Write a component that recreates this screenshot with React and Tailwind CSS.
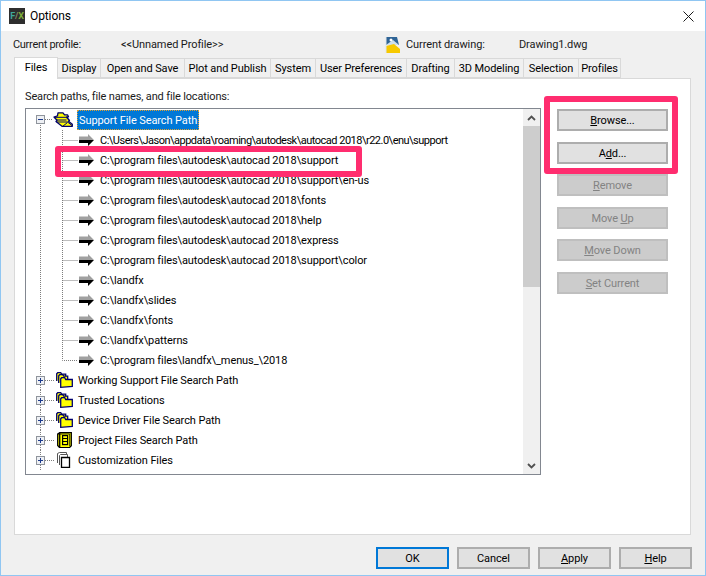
const font = "font-['Roboto','Liberation_Sans',Arial,sans-serif]";

const tabs = [
  { label: "Files", w: "w-[44px]", active: true },
  { label: "Display", w: "w-[43px]" },
  { label: "Open and Save", w: "w-[84px]" },
  { label: "Plot and Publish", w: "w-[86px]" },
  { label: "System", w: "w-[45px]" },
  { label: "User Preferences", w: "w-[91px]" },
  { label: "Drafting", w: "w-[48px]" },
  { label: "3D Modeling", w: "w-[69px]" },
  { label: "Selection", w: "w-[55px]" },
  { label: "Profiles", w: "w-[42px]" },
];

const paths = [
  "C:\\Users\\Jason\\appdata\\roaming\\autodesk\\autocad 2018\\r22.0\\enu\\support",
  "C:\\program files\\autodesk\\autocad 2018\\support",
  "C:\\program files\\autodesk\\autocad 2018\\support\\en-us",
  "C:\\program files\\autodesk\\autocad 2018\\fonts",
  "C:\\program files\\autodesk\\autocad 2018\\help",
  "C:\\program files\\autodesk\\autocad 2018\\express",
  "C:\\program files\\autodesk\\autocad 2018\\support\\color",
  "C:\\landfx",
  "C:\\landfx\\slides",
  "C:\\landfx\\fonts",
  "C:\\landfx\\patterns",
  "C:\\program files\\landfx\\_menus_\\2018",
];

const sections = [
  { label: "Working Support File Search Path", icon: "folders" },
  { label: "Trusted Locations", icon: "folders" },
  { label: "Device Driver File Search Path", icon: "folders" },
  { label: "Project Files Search Path", icon: "project" },
  { label: "Customization Files", icon: "pages" },
];

const AppIcon = () => (
  <div className="flex h-4 w-4 shrink-0 items-center justify-center bg-[#2e2e2e] text-[9px] font-bold leading-none">
    <span className="text-[#3fa89a]">F</span>
    <span className="text-[#8a8a6a]">/</span>
    <span className="text-[#7fae3a]">X</span>
  </div>
);

const DrawingIcon = () => (
  <svg width="16" height="16" viewBox="0 0 16 16" className="shrink-0">
    <path d="M1 0h11l2 8H1z" fill="#2f6496" />
    <path d="M1 8L8 3l6 5z" fill="#cfe0ec" />
    <path d="M1 9l8-2 6 5v4H1z" fill="#f7c900" />
    <circle cx="6" cy="3" r="1.5" fill="#fff" />
    <path d="M1 0v16" stroke="#e0e6ea" />
  </svg>
);

const Expander = () => (
  <svg width="9" height="9" viewBox="0 0 9 9" className="shrink-0">
    <rect x="0.500" y="0.500" width="8" height="8" fill="#eef0f4" stroke="#8f949c" />
    <path d="M2 4.500h5" stroke="#1c3a8c" />
    <path d="M4.500 2v5" stroke="#1c3a8c" />
  </svg>
);

// open stack of folders at the top of the tree
const OpenFolders = () => (
  <svg width="20" height="16" viewBox="0 0 20 16" className="shrink-0">
    <path d="M5 .8h5l1.500 2h3l1 2h-2l3 3.500-1 1 3.800 3v2H9L3 9.500l1-1.200L1 5l3.500-1.200z" fill="#ffff00" stroke="#00006e" strokeWidth="1.300" strokeLinejoin="round" />
    <path d="M1.500 5.300h11.500l3.500 3.400M4 8h9.500M3.500 10h11l4.500 3.500M9.500 14.500l5-4" stroke="#00006e" fill="none" />
  </svg>
);

const Folders = () => (
  <svg width="17" height="16" viewBox="0 0 17 16" className="shrink-0">
    <path d="M.7 9V1.700l1-1h3l1 1.500h4v3" fill="#ffff00" stroke="#00006e" strokeWidth="1.300" />
    <path d="M2.700 11V3.700l1-1h3l1 1.500h4v3" fill="#ffff00" stroke="#00006e" strokeWidth="1.300" />
    <path d="M4.700 15.300V6.700l1-1h3l1 1.800h6.600v6.800z" fill="#ffff00" stroke="#00006e" strokeWidth="1.300" />
  </svg>
);

const ProjectFiles = () => (
  <svg width="17" height="16" viewBox="0 0 17 16" className="shrink-0">
    <path d="M1.700 13.500V2l2-1.300h11.600v13l-2 2H3.700z" fill="#ffff00" stroke="#000" strokeWidth="1.300" />
    <path d="M3.700 .7v15" stroke="#000" strokeWidth="1.300" />
    <path d="M1.700 2h12v12" fill="none" stroke="#000" strokeWidth=".8" />
    <rect x="6.600" y="3.600" width="5" height="9" fill="#ffff00" stroke="#000" strokeWidth="1.200" />
    <path d="M7 6.500h4M7 9.500h4" stroke="#000" />
  </svg>
);

const Pages = () => (
  <svg width="17" height="16" viewBox="0 0 17 16" className="shrink-0">
    <path d="M1.500 11V1.500l2-1h7v3" fill="#fff" stroke="#555" />
    <path d="M3.500 13V3.500l1-1h7v3" fill="#fff" stroke="#555" />
    <path d="M5.500 15.300V5.500h8v9.800z" fill="#fff" stroke="#000" strokeWidth="1.300" />
  </svg>
);

const sectionIcons = { folders: Folders, project: ProjectFiles, pages: Pages };

const Arrow = () => (
  <svg width="15" height="12" viewBox="0 0 15 12" className="shrink-0">
    <path d="M0 2.500h9V0l6 6H0z" fill="#a0a0a0" />
    <path d="M0 6h15l-6 6V9H0z" fill="#000" />
  </svg>
);

// dotted tree guides, drawn per row
const Dots = ({ d }) => <path d={d} stroke="#7d7d7d" strokeDasharray="1 1" fill="none" />;

const PathRow = ({ text, last, tight }) => (
  <div className="flex h-5 items-center">
    <svg width="53" height="20" viewBox="0 0 53 20" className="shrink-0">
      <Dots d="M14.500 0v20" />
      <Dots d={last ? "M36.500 0v10.500H52" : "M36.500 0v20M36.500 10.500H52"} />
    </svg>
    <Arrow />
    <span className={`ml-[6px] whitespace-nowrap pt-[2px] text-black ${tight ? "tracking-[-0.5px]" : ""}`}>{text}</span>
  </div>
);

const SectionRow = ({ label, icon }) => {
  const Icon = sectionIcons[icon];
  return (
    <div className="relative flex h-5 items-center">
      <svg width="30" height="20" viewBox="0 0 30 20" className="shrink-0">
        <Dots d="M14.500 0v5M14.500 15v5" />
        <Dots d="M19 10.500h10" />
      </svg>
      <span className="absolute left-[10px] top-[6px] flex">
        <Expander />
      </span>
      <Icon />
      <span className="ml-[5px] whitespace-nowrap pt-[2px] text-black">{label}</span>
    </div>
  );
};

const DialogButton = ({ children, disabled, className = "" }) => (
  <button
    className={`h-[22px] w-[111px] pt-px text-center text-[11px] leading-[17px] ${
      disabled
        ? "border-2 border-[#bfbfbf] bg-[#cccccc] text-[#838383]"
        : "border-2 border-[#adadad] bg-[#e1e1e1] text-black"
    } ${className}`}
  >
    {children}
  </button>
);

const FooterButton = ({ children, primary }) => (
  <button
    className={`h-[22px] w-[73px] pt-px bg-[#e1e1e1] text-[11px] leading-[17px] text-black ${
      primary ? "border-2 border-[#0078d7]" : "border-2 border-[#adadad]"
    }`}
  >
    {children}
  </button>
);

export default function App() {
  return (
    <div className={`${font} relative flex h-[576px] w-[706px] flex-col border border-[#90c6f2] bg-[#f0f0f0] text-[11px] tracking-[-0.1px] text-[#1a1a1a]`}>
      {/* Title bar */}
      <div className="flex h-[30px] items-center bg-white pl-2">
        <AppIcon />
        <span className="ml-[5px] text-[12px] text-black">Options</span>
        <svg width="11" height="11" viewBox="0 0 11 11" className="ml-auto mr-[11px]">
          <path d="M0.500 0.500l10 10M10.500 0.500l-10 10" stroke="#1a1a1a" />
        </svg>
      </div>

      {/* Profile info */}
      <div className="flex h-[27px] items-center">
        <span className="ml-3 w-[108px] pt-px tracking-[-0.3px]">Current profile:</span>
        <span className="w-[264px] pt-px">&lt;&lt;Unnamed Profile&gt;&gt;</span>
        <DrawingIcon />
        <span className="ml-[5px] w-[113px] pt-px">Current drawing:</span>
        <span className="pt-px">Drawing1.dwg</span>
      </div>

      {/* Tabs */}
      <div className="relative z-10 ml-[13px] flex h-5 items-end">
        {tabs.map((t) =>
          t.active ? (
            <div key={t.label} className={`${t.w} -mb-px h-[22px] border border-b-0 border-[#d9d9d9] bg-white pt-[2px] text-center text-black`}>
              {t.label}
            </div>
          ) : (
            <div key={t.label} className={`${t.w} h-[20px] whitespace-nowrap border border-l-0 border-[#d9d9d9] bg-[#f0f0f0] pt-[2px] text-center text-black`}>
              {t.label}
            </div>
          ),
        )}
      </div>

      {/* Files page */}
      <div className="ml-[13px] flex h-[457px] w-[677px] border border-[#d9d9d9] bg-white">
        <div className="ml-[10px] flex w-[516px] flex-col">
          <div className="h-[29px] pt-[11px] leading-[14px] tracking-[-0.15px] text-[#1a1a1a]">Search paths, file names, and file locations:</div>
          <div className="flex h-[367px] border border-[#828790]">
            <div className="min-w-0 flex-1 overflow-hidden">
              <div className="flex h-[21px] items-center">
                <svg width="27" height="21" viewBox="0 0 27 21" className="shrink-0">
                  <Dots d="M14.500 16v5" />
                  <Dots d="M19 10.500h8" />
                  <rect x="10.500" y="6.500" width="8" height="8" fill="#eef0f4" stroke="#8f949c" />
                  <path d="M12 10.500h5" stroke="#1c3a8c" />
                </svg>
                <OpenFolders />
                <span className="ml-[4px] whitespace-nowrap border border-dotted border-[#e0a030] bg-[#0078d7] px-[1px] pt-px leading-[17px] text-white">
                  Support File Search Path
                </span>
              </div>
              {paths.map((p, i) => (
                <PathRow key={p} text={p} tight={i === 0} last={i === paths.length - 1} />
              ))}
              {sections.map((s) => (
                <SectionRow key={s.label} label={s.label} icon={s.icon} />
              ))}
            </div>

            {/* Scrollbar */}
            <div className="flex w-[17px] shrink-0 flex-col bg-[#f0f0f0]">
              <div className="flex h-[17px] items-center justify-center">
                <svg width="9" height="6" viewBox="0 0 9 6">
                  <path d="M1 5l3.500-3.500L8 5" stroke="#505050" strokeWidth="1.800" fill="none" />
                </svg>
              </div>
              <div className="h-[161px] bg-[#cdcdcd]" />
              <div className="flex-1" />
              <div className="flex h-[17px] items-center justify-center">
                <svg width="9" height="6" viewBox="0 0 9 6">
                  <path d="M1 1l3.500 3.500L8 1" stroke="#505050" strokeWidth="1.800" fill="none" />
                </svg>
              </div>
            </div>
          </div>
        </div>

        <div className="ml-4 flex flex-col pt-[30px]">
          <DialogButton><u>B</u>rowse...</DialogButton>
          <DialogButton className="mt-[11px]">A<u>d</u>d...</DialogButton>
          <DialogButton disabled className="mt-[10px]"><u>R</u>emove</DialogButton>
          <DialogButton disabled className="mt-[11px]">Move <u>U</u>p</DialogButton>
          <DialogButton disabled className="mt-[10px]"><u>M</u>ove Down</DialogButton>
          <DialogButton disabled className="mt-[11px]"><u>S</u>et Current</DialogButton>
        </div>
      </div>

      {/* Footer */}
      <div className="flex flex-1 items-start justify-end gap-2 pr-[13px] pt-[12px]">
        <FooterButton primary>OK</FooterButton>
        <FooterButton>Cancel</FooterButton>
        <FooterButton><u>A</u>pply</FooterButton>
        <FooterButton><u>H</u>elp</FooterButton>
      </div>

      {/* Pink callouts laid over the screenshot */}
      <div className="absolute left-[54px] top-[145px] h-[31px] w-[307px] rounded-[3px] border-[6px] border-[#ff2d6f]" />
      <div className="absolute left-[543px] top-[95px] h-[78px] w-[134px] rounded-[3px] border-[6px] border-[#ff2d6f]" />
    </div>
  );
}
